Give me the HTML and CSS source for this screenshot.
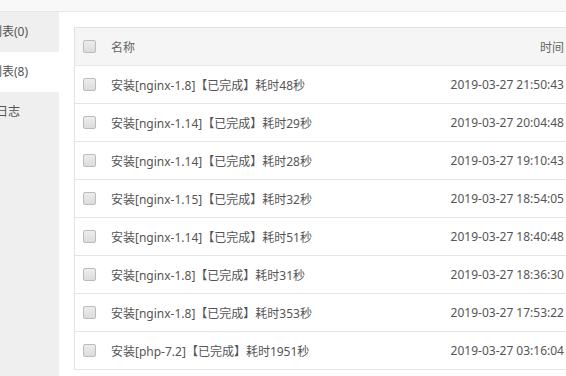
FILE: index.html
```html
<!DOCTYPE html>
<html lang="zh">
<head>
<meta charset="utf-8">
<link rel="stylesheet" href="styles.css">
</head>
<body>
<div class="top"></div>
<div class="layout">
  <aside class="side">
    <div class="side-item">任务列表(0)</div>
    <div class="side-item active">安装列表(8)</div>
    <div class="side-item log">操作日志</div>
  </aside>
  <main class="main">
    <table class="grid">
      <thead>
        <tr><th class="c-check"><span class="cb"></span></th><th class="c-name">名称</th><th class="c-time">时间</th></tr>
      </thead>
      <tbody>
        <tr><td class="c-check"><span class="cb"></span></td><td class="c-name">安装[nginx-1.8]【已完成】耗时48秒</td><td class="c-time">2019-03-27 21:50:43</td></tr>
        <tr><td class="c-check"><span class="cb"></span></td><td class="c-name">安装[nginx-1.14]【已完成】耗时29秒</td><td class="c-time">2019-03-27 20:04:48</td></tr>
        <tr><td class="c-check"><span class="cb"></span></td><td class="c-name">安装[nginx-1.14]【已完成】耗时28秒</td><td class="c-time">2019-03-27 19:10:43</td></tr>
        <tr><td class="c-check"><span class="cb"></span></td><td class="c-name">安装[nginx-1.15]【已完成】耗时32秒</td><td class="c-time">2019-03-27 18:54:05</td></tr>
        <tr><td class="c-check"><span class="cb"></span></td><td class="c-name">安装[nginx-1.14]【已完成】耗时51秒</td><td class="c-time">2019-03-27 18:40:48</td></tr>
        <tr><td class="c-check"><span class="cb"></span></td><td class="c-name">安装[nginx-1.8]【已完成】耗时31秒</td><td class="c-time">2019-03-27 18:36:30</td></tr>
        <tr><td class="c-check"><span class="cb"></span></td><td class="c-name">安装[nginx-1.8]【已完成】耗时353秒</td><td class="c-time">2019-03-27 17:53:22</td></tr>
        <tr><td class="c-check"><span class="cb"></span></td><td class="c-name">安装[php-7.2]【已完成】耗时1951秒</td><td class="c-time">2019-03-27 03:16:04</td></tr>
      </tbody>
    </table>
  </main>
</div>
</body>
</html>
```
FILE: styles.css
```css
html, body {
  margin: 0;
  padding: 0;
  background: #fff;
  font-family: "Noto Sans", "Noto Sans CJK SC", sans-serif;
  font-size: 12px;
  color: #555;
  overflow: hidden;
}
.top {
  height: 11px;
  background: #f8f8f8;
  border-bottom: 1px solid #e6e6e6;
}
.layout {
  display: flex;
  height: 364px;
}
.side {
  width: 59px;
  flex: none;
  background: #efefef;
  overflow: hidden;
}
.side-item {
  height: 40px;
  line-height: 40px;
  white-space: nowrap;
  text-indent: -34px;
  color: #555;
}
.side-item.log {
  text-indent: -28px;
}
.side-item.active {
  background: #fff;
}
.main {
  flex: 1;
  padding: 15px 0 0 15px;
  overflow: hidden;
  min-width: 0;
}
.grid {
  border-collapse: collapse;
  width: 515px;
  border: 1px solid #e2e2e2;
}
.grid th, .grid td {
  height: 37px;
  padding: 0;
  border-bottom: 1px solid #e6e6e6;
  font-weight: normal;
  text-align: left;
  white-space: nowrap;
}
.grid thead th {
  background: #f5f5f5;
  color: #666;
}
.c-check {
  width: 28px;
  padding-left: 8px !important;
}
.c-name {
  padding-left: 0;
}
.grid .c-time {
  text-align: right;
  padding-right: 24px;
}
.cb {
  display: block;
  width: 11px;
  height: 11px;
  border: 1px solid #bcbcbc;
  border-radius: 2px;
  background: linear-gradient(#ededed, #dcdcdc);
}
```
